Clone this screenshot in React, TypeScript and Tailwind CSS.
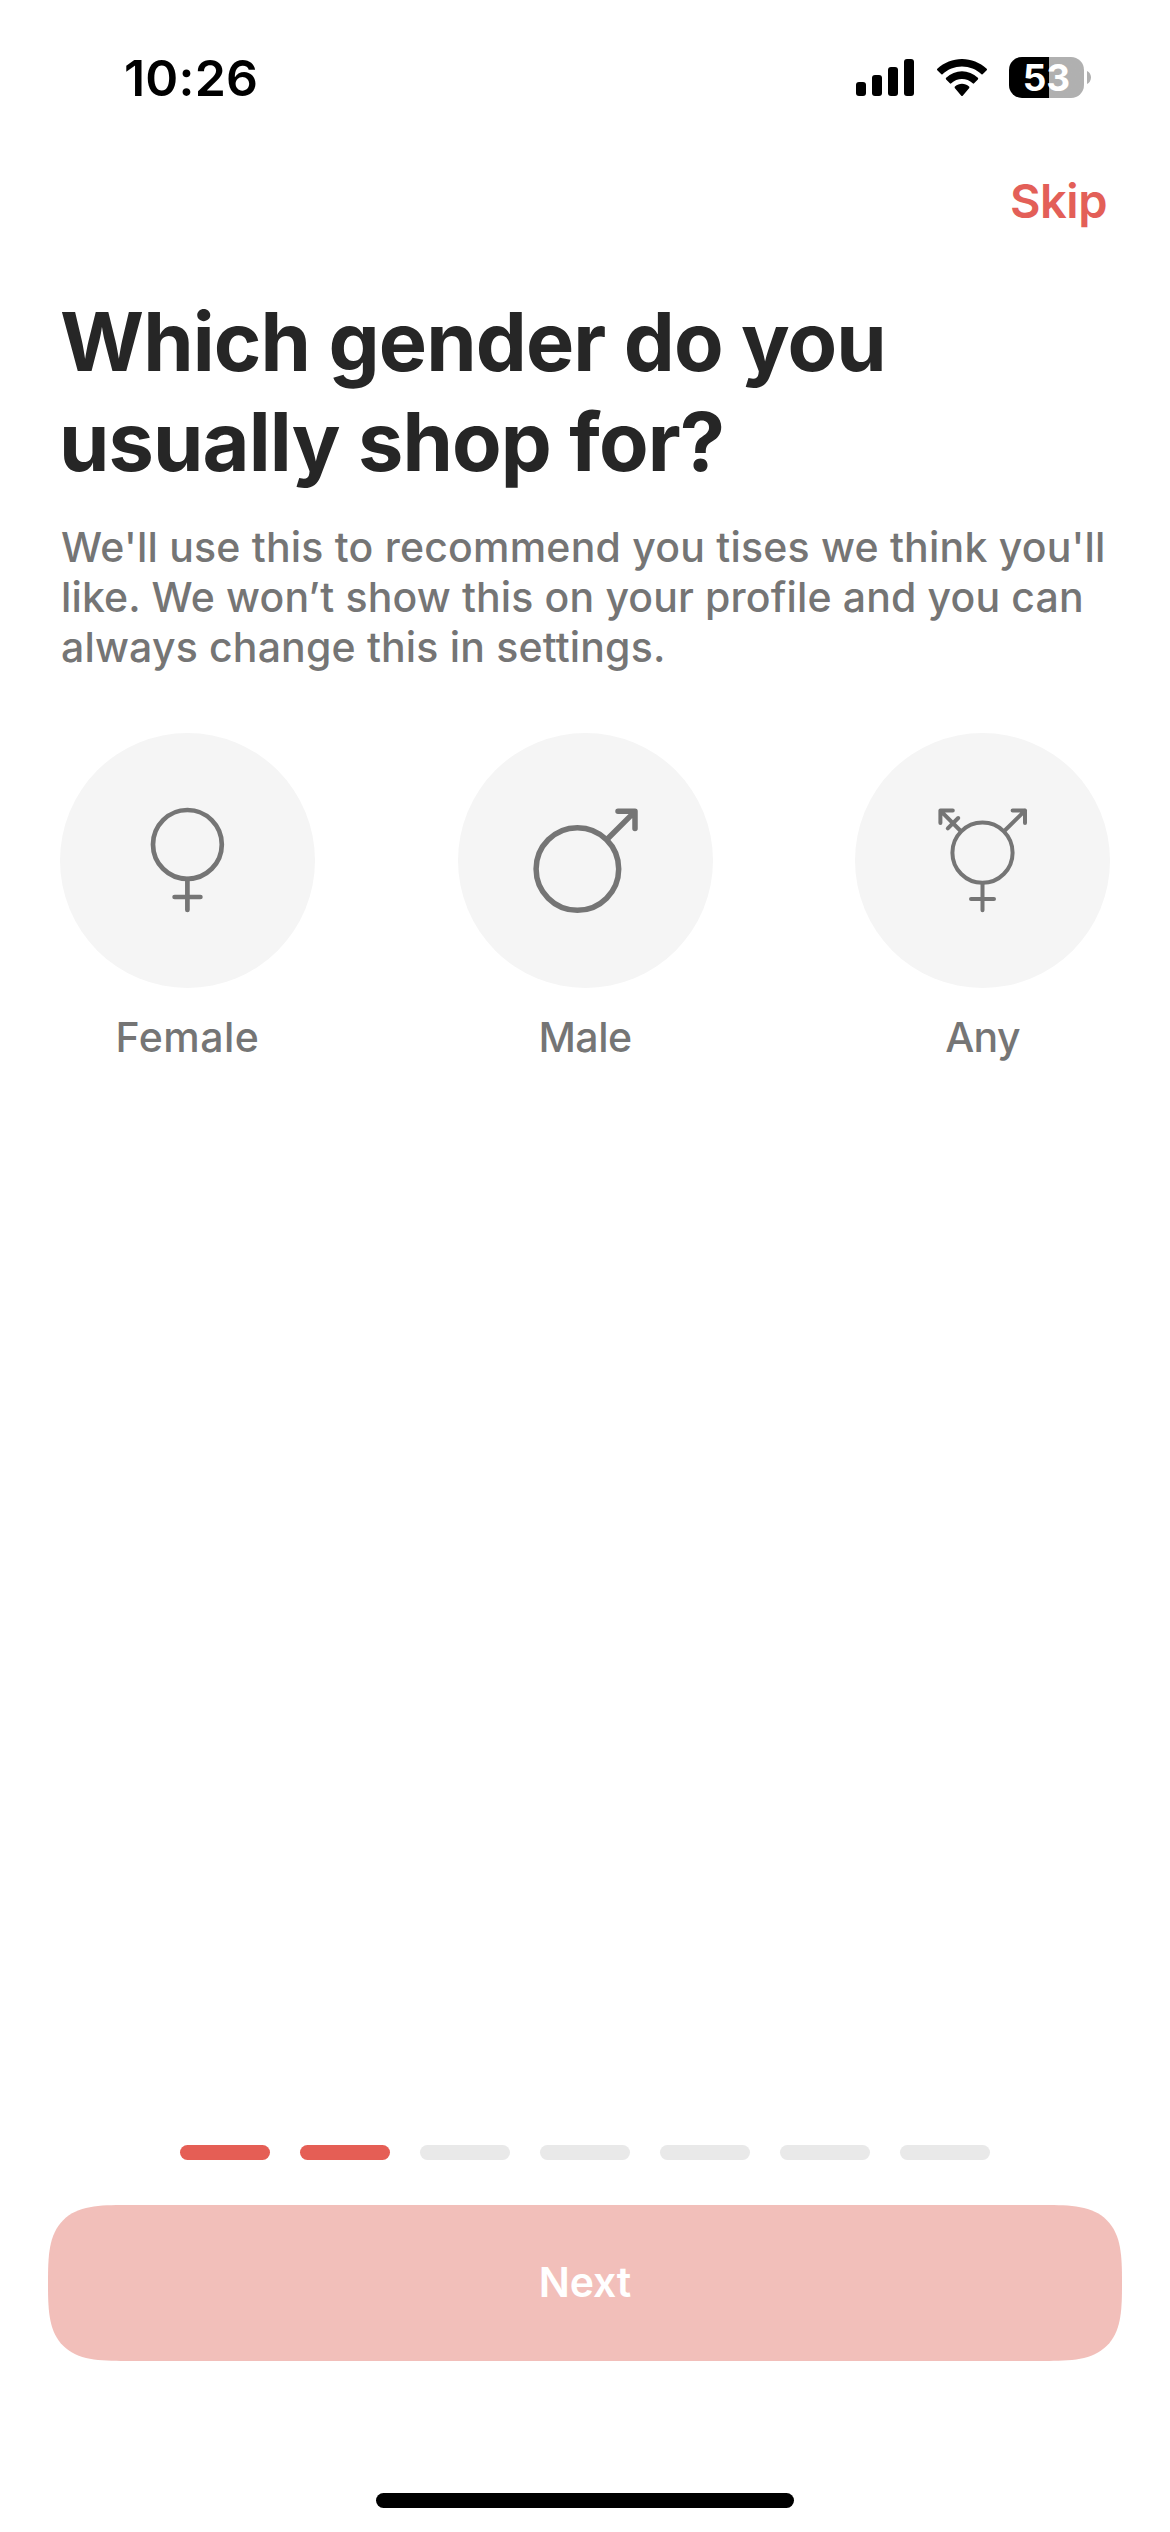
import type { ReactNode } from "react";

function SignalIcon() {
  return (
    <div className="flex h-[37px] items-end gap-[6px]">
      <span className="h-[14px] w-[10px] rounded-[3px] bg-black" />
      <span className="h-[21px] w-[10px] rounded-[3px] bg-black" />
      <span className="h-[29px] w-[10px] rounded-[3px] bg-black" />
      <span className="h-[37px] w-[10px] rounded-[3px] bg-black" />
    </div>
  );
}

function WifiIcon() {
  return (
    <svg width="50" height="37" viewBox="0 0 17.143 12.33" preserveAspectRatio="none" fill="#000">
      <path d="M8.571 2.466C11.058 2.466 13.45 3.388 15.253 5.042C15.389 5.17 15.606 5.168 15.739 5.038L17.037 3.775C17.105 3.709 17.142 3.62 17.142 3.527C17.141 3.435 17.102 3.346 17.034 3.281C12.303 -1.094 4.839 -1.094 0.108 3.281C0.04 3.346 0.001 3.435 0 3.527C0 3.62 0.037 3.709 0.105 3.775L1.403 5.038C1.536 5.168 1.753 5.17 1.889 5.042C3.692 3.388 6.084 2.466 8.571 2.466Z" />
      <path d="M8.568 6.687C9.925 6.686 11.234 7.198 12.24 8.122C12.376 8.253 12.591 8.251 12.723 8.116L14.011 6.797C14.078 6.728 14.116 6.634 14.115 6.536C14.114 6.438 14.075 6.345 14.005 6.278C10.942 3.387 6.197 3.387 3.133 6.278C3.064 6.345 3.024 6.438 3.023 6.536C3.023 6.634 3.06 6.728 3.128 6.797L4.415 8.116C4.548 8.251 4.762 8.253 4.898 8.122C5.904 7.199 7.212 6.687 8.568 6.687Z" />
      <path d="M11.092 9.48C11.094 9.585 11.057 9.687 10.99 9.761L8.813 12.216C8.749 12.288 8.662 12.328 8.572 12.328C8.481 12.328 8.394 12.288 8.33 12.216L6.153 9.761C6.086 9.687 6.049 9.585 6.051 9.48C6.053 9.375 6.094 9.275 6.164 9.205C7.554 7.932 9.589 7.932 10.98 9.205C11.049 9.275 11.09 9.375 11.092 9.48Z" />
    </svg>
  );
}

function Battery() {
  return (
    <div className="flex items-center gap-[3px]">
      <div className="flex h-[41px] w-[75px] items-center justify-center rounded-[13px] bg-linear-to-r from-black from-[40px] to-[#b0b0b0] to-[40px]">
        <span className="text-[37px] leading-[41px] font-bold text-white">53</span>
      </div>
      <svg width="4" height="13" viewBox="0 0 4 13" fill="#b0b0b0">
        <path d="M0 0C2.4 1 4 3.6 4 6.5S2.4 12 0 13Z" />
      </svg>
    </div>
  );
}

function GenderSvg({ stroke, children }: { stroke: number; children: ReactNode }) {
  return (
    <svg
      width="255"
      height="255"
      viewBox="0 0 255 255"
      fill="none"
      stroke="#757575"
      strokeWidth={stroke}
      strokeLinecap="round"
      strokeLinejoin="round"
    >
      {children}
    </svg>
  );
}

function FemaleIcon() {
  return (
    <GenderSvg stroke={4.7}>
      <circle cx="127.4" cy="111.4" r="34.4" />
      <path d="M127.4 146V177M114.6 164H140.4" />
    </GenderSvg>
  );
}

function MaleIcon() {
  return (
    <GenderSvg stroke={5.5}>
      <circle cx="119.4" cy="136" r="41.3" />
      <path d="M149.4 106L176.8 78.6M160 78.3H177V95.6" />
    </GenderSvg>
  );
}

function AnyIcon() {
  return (
    <GenderSvg stroke={4}>
      <circle cx="127.5" cy="119.7" r="30.1" />
      <path d="M127.5 150V177.3M116 166H139" />
      <path d="M149.3 98L170 77.6M157.6 77.4H170V90" />
      <path d="M105.7 98L85.4 77.6M97.8 77.4H85.4V90M92.8 95.4L103.2 85" />
    </GenderSvg>
  );
}

const OPTIONS = [
  { label: "Female", Icon: FemaleIcon, tracking: "tracking-[0.5px]" },
  { label: "Male", Icon: MaleIcon, tracking: "tracking-[-0.5px]" },
  { label: "Any", Icon: AnyIcon, tracking: "tracking-[-0.7px]" },
];

const STEPS = 7;
const CURRENT_STEP = 2;

export default function App() {
  return (
    <div className="flex h-[2532px] w-[1170px] flex-col bg-white font-[Inter,sans-serif]">
      <header className="flex h-[109px] items-start justify-between pt-12 pr-[79px] pl-[124px]">
        <span className="text-[50px] leading-[60px] font-semibold tracking-[0.2px] text-black">10:26</span>
        <div className="flex items-center pt-[9px]">
          <SignalIcon />
          <div className="pr-[22.5px] pl-[22.5px]">
            <WifiIcon />
          </div>
          <Battery />
        </div>
      </header>

      <div className="mt-16 flex justify-end pr-[63px]">
        <button className="text-[47px] leading-[56px] font-semibold tracking-[-0.5px] text-[#e35f58]">Skip</button>
      </div>

      <main className="px-[60px] pt-[63px]">
        <h1 className="text-[81px] leading-[100px] font-bold tracking-[-0.87px] whitespace-nowrap text-[#262626]">
          <span className="block">Which gender do you</span>
          <span className="-ml-px block">usually shop for?</span>
        </h1>
        <p className="mt-[30px] pl-px text-[41px] leading-[50px] font-medium whitespace-nowrap text-[#757575]">
          <span className="block tracking-[0.21px]">We'll use this to recommend you tises we think you'll</span>
          <span className="block tracking-[0.14px]">like. We won’t show this on your profile and you can</span>
          <span className="block tracking-[0.17px]">always change this in settings.</span>
        </p>

        <div className="mt-[61px] flex justify-between">
          {OPTIONS.map(({ label, Icon, tracking }) => (
            <button key={label} className="flex w-[255px] flex-col items-center gap-6">
              <span className="block size-[255px] rounded-full bg-[#f5f5f5]">
                <Icon />
              </span>
              <span className={`text-[41px] leading-[50px] font-medium text-[#757575] ${tracking}`}>{label}</span>
            </button>
          ))}
        </div>
      </main>

      <footer className="mt-auto flex flex-col items-center pb-6">
        <div className="flex gap-[30px]">
          {Array.from({ length: STEPS }, (_, i) => (
            <span
              key={i}
              className={`h-[15px] w-[90px] rounded-full ${i < CURRENT_STEP ? "bg-[#e55e55]" : "bg-[#e9e9e9]"}`}
            />
          ))}
        </div>
        <button className="mt-[45px] flex h-[156px] w-[1074px] items-center justify-center rounded-[78px] bg-[#f2bfba] pb-0.5 text-[41px] leading-[50px] font-semibold tracking-[-0.15px] text-white [corner-shape:superellipse(1.68)]">
          Next
        </button>
        <div className="mt-[132px] h-[15px] w-[418px] rounded-full bg-black" />
      </footer>
    </div>
  );
}
